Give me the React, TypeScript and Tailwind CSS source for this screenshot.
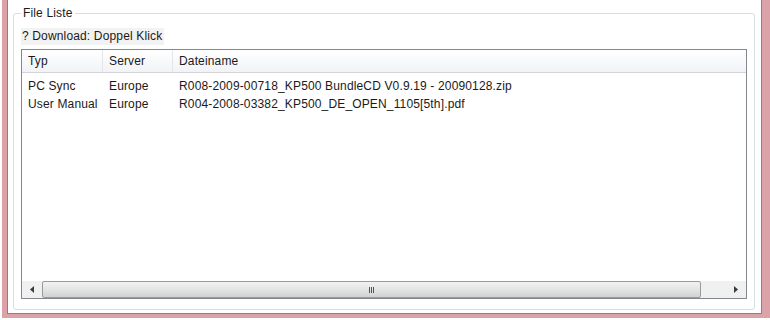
import React from 'react';

const columns = [
	{ label: 'Typ', width: 'w-[81px]' },
	{ label: 'Server', width: 'w-[70px]' },
	{ label: 'Dateiname', width: 'flex-1' },
];

const rows = [
	['PC Sync', 'Europe', 'R008-2009-00718_KP500 BundleCD V0.9.19 - 20090128.zip'],
	['User Manual', 'Europe', 'R004-2008-03382_KP500_DE_OPEN_1105[5th].pdf'],
];

const ScrollBar: React.FC = () => (
	<div className="flex h-[17px] bg-[#f0f0f0] shrink-0">
		<div className="w-[20px] flex items-center justify-center">
			<svg width="4" height="7" viewBox="0 0 4 7">
				<path d="M4 0 L0 3.5 L4 7 Z" fill="#3c3c3c" />
			</svg>
		</div>
		<div className="w-[659px] rounded-[2px] border border-[#9a9a9a] bg-gradient-to-b from-[#f2f2f2] via-[#e4e4e4] to-[#d2d2d2] flex items-center justify-center">
			<div className="flex gap-[1px]">
				<div className="w-[1px] h-[6px] bg-[#555]" />
				<div className="w-[1px] h-[6px] bg-[#555]" />
				<div className="w-[1px] h-[6px] bg-[#555]" />
			</div>
		</div>
		<div className="flex-1 flex items-center justify-end pr-[8px]">
			<svg width="4" height="7" viewBox="0 0 4 7">
				<path d="M0 0 L4 3.5 L0 7 Z" fill="#3c3c3c" />
			</svg>
		</div>
	</div>
);

const App: React.FC = () => {
	return (
		<div className="w-[770px] h-[320px] bg-white pl-[2px] pb-[2px] font-['Liberation_Sans',Arial,sans-serif] text-[12px] tracking-[0.15px] text-[#1a1a1a]">
			<div className="h-full bg-[#dba3a7] pl-[5px] pr-[8px] pb-[4px]">
				<div className="h-full bg-white border-l border-r border-b border-[#a87478] pl-[5px] pr-[6px] pt-[6px] pb-[4px]">
					<fieldset className="h-[304px] border border-[#d6dde3] rounded-[3px] px-[7px] pb-[10px] flex flex-col">
						<legend className="ml-0 px-[2px] leading-[14px] text-[#1a1a1a]">File Liste</legend>
						<div className="mt-[8px] h-[17px] w-fit bg-[#f2f2f2] pl-[1px] pr-[2px] leading-[17px]">
							? Download: Doppel Klick
						</div>
						<div className="mt-[4px] flex-1 border border-[#828790] flex flex-col">
							<div className="flex h-[23px] bg-gradient-to-b from-white to-[#f1f3f7] border-b border-[#d5d5d5] shrink-0">
								{columns.map((col, index) => (
									<div
										key={index}
										className={`${col.width} ${index < 2 ? 'border-r border-[#e3e5e8]' : ''} pl-[6px] leading-[23px]`}
									>
										{col.label}
									</div>
								))}
							</div>
							<div className="flex-1 pt-[4px]">
								{rows.map((row, index) => (
									<div key={index} className="flex h-[18px] leading-[18px]">
										{row.map((cell, cellIndex) => (
											<div
												key={cellIndex}
												className={`${columns[cellIndex].width} ${cellIndex < 2 ? 'pr-[1px]' : ''} pl-[6px] whitespace-nowrap overflow-hidden`}
											>
												{cell}
											</div>
										))}
									</div>
								))}
							</div>
							<ScrollBar />
						</div>
					</fieldset>
				</div>
			</div>
		</div>
	);
};

export default App;
